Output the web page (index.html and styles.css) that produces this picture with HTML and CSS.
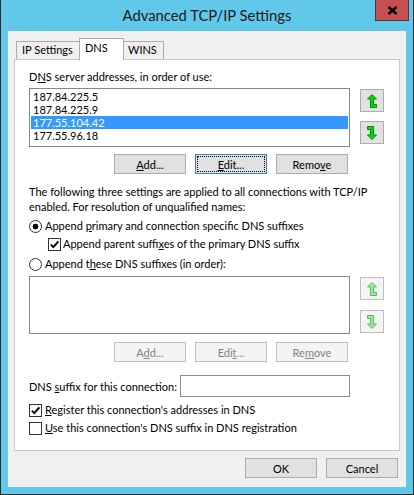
FILE: index.html
```html
<!DOCTYPE html>
<html>
<head>
<meta charset="utf-8">
<title>Advanced TCP/IP Settings</title>
<link rel="stylesheet" href="styles.css">
</head>
<body>
<div class="window">
  <div class="titlebar">
    <span></span>
    <div class="title">Advanced TCP/IP Settings</div>
    <div class="close">
      <svg width="11" height="9" viewBox="0 0 11 9"><path d="M1.5 1 L9.5 8 M9.5 1 L1.5 8" stroke="#000" stroke-width="2.4" fill="none"/></svg>
    </div>
  </div>
  <div class="client">
    <div class="tabs">
      <div class="tab tab-ip">IP Settings</div>
      <div class="tab tab-active tab-dns">DNS</div>
      <div class="tab tab-wins">WINS</div>
    </div>
    <div class="panel">
      <div class="label">D<u>N</u>S server addresses, in order of use:</div>
      <div class="listrow">
        <div class="list list-dns">
          <div class="item">187.84.225.5</div>
          <div class="item">187.84.225.9</div>
          <div class="item item-selected">177.55.104.42</div>
          <div class="item">177.55.96.18</div>
        </div>
        <div class="arrows">
          <div class="arrowbtn">
            <svg width="10" height="14" viewBox="0 0 10 14"><polygon points="5,0.5 9.5,5 6.5,5 6.5,10.5 9.5,10.5 9.5,13.5 3.5,13.5 3.5,5 0.5,5" fill="#00dc00" stroke="#008a00" stroke-width="1"/></svg>
          </div>
          <div class="arrowbtn">
            <svg width="10" height="14" viewBox="0 0 10 14"><polygon points="0.5,0.5 6.5,0.5 6.5,9 9.5,9 5,13.5 0.5,9 3.5,9 3.5,3.5 0.5,3.5" fill="#00dc00" stroke="#008a00" stroke-width="1"/></svg>
          </div>
        </div>
      </div>
      <div class="btnrow">
        <div class="btn"><u>A</u>dd...</div>
        <div class="btn btn-focus"><u>E</u>dit...</div>
        <div class="btn">Remo<u>v</u>e</div>
      </div>
      <p class="note">The following three settings are applied to all connections with TCP/IP<br>enabled. For resolution of unqualified names:</p>
      <div class="opt opt-first">
        <span class="radio radio-on"></span>
        <span>Append <u>p</u>rimary and connection specific DNS suffixes</span>
      </div>
      <div class="opt opt-sub">
        <span class="check"><svg width="11" height="11" viewBox="0 0 11 11"><path d="M1.8 5.6 L4.3 8.2 L9.4 2.3" stroke="#000" stroke-width="1.9" fill="none"/></svg></span>
        <span>Append parent suffi<u>x</u>es of the primary DNS suffix</span>
      </div>
      <div class="opt opt-first">
        <span class="radio"></span>
        <span>Append t<u>h</u>ese DNS suffixes (in order):</span>
      </div>
      <div class="listrow listrow-suffix">
        <div class="list list-suffix"></div>
        <div class="arrows arrows-wide">
          <div class="arrowbtn arrowbtn-disabled">
            <svg width="10" height="14" viewBox="0 0 10 14"><polygon points="5,0.5 9.5,5 6.5,5 6.5,10.5 9.5,10.5 9.5,13.5 3.5,13.5 3.5,5 0.5,5" fill="#9aea9a" stroke="#5cbc5c" stroke-width="1"/></svg>
          </div>
          <div class="arrowbtn arrowbtn-disabled">
            <svg width="10" height="14" viewBox="0 0 10 14"><polygon points="0.5,0.5 6.5,0.5 6.5,9 9.5,9 5,13.5 0.5,9 3.5,9 3.5,3.5 0.5,3.5" fill="#9aea9a" stroke="#5cbc5c" stroke-width="1"/></svg>
          </div>
        </div>
      </div>
      <div class="btnrow btnrow-disabled">
        <div class="btn btn-disabled">A<u>d</u>d...</div>
        <div class="btn btn-disabled">Edi<u>t</u>...</div>
        <div class="btn btn-disabled">Re<u>m</u>ove</div>
      </div>
      <div class="suffixrow">
        <span class="suffixlabel">DNS <u>s</u>uffix for this connection:</span>
        <div class="textbox"></div>
      </div>
      <div class="opt opt-register">
        <span class="check"><svg width="11" height="11" viewBox="0 0 11 11"><path d="M1.8 5.6 L4.3 8.2 L9.4 2.3" stroke="#000" stroke-width="1.9" fill="none"/></svg></span>
        <span><u>R</u>egister this connection's addresses in DNS</span>
      </div>
      <div class="opt opt-use">
        <span class="check"></span>
        <span><u>U</u>se this connection's DNS suffix in DNS registration</span>
      </div>
    </div>
    <div class="footer">
      <div class="btn">OK</div>
      <div class="btn">Cancel</div>
    </div>
  </div>
</div>
</body>
</html>
```
FILE: styles.css
```css
html, body {
  margin: 0;
  padding: 0;
}
body {
  font-family: Lato, "Open Sans", "Liberation Sans", sans-serif;
  font-size: 11px;
  color: #000;
  line-height: 15px;
}
u {
  text-decoration: underline;
  text-underline-offset: 1px;
}
.window {
  width: 414px;
  height: 495px;
  box-sizing: border-box;
  background: #62c8ea;
  border: 1px solid #2b2b2b;
  border-top: 0;
  display: flex;
  flex-direction: column;
}
.titlebar {
  height: 31px;
  flex: none;
  display: grid;
  grid-template-columns: 1fr auto 1fr;
  align-items: start;
  padding: 0 4px;
}
.title {
  font-size: 14.8px;
  line-height: 30px;
  color: #1b1b1b;
}
.close {
  justify-self: end;
  width: 34px;
  height: 21px;
  box-sizing: border-box;
  background: #c75050;
  border: 1px solid #3c3c3c;
  border-top: 0;
  display: flex;
  align-items: center;
  justify-content: center;
}
.client {
  height: 456px;
  margin: 0 7px;
  background: #f0f0f0;
  display: flex;
  flex-direction: column;
}
.tabs {
  height: 28px;
  box-sizing: border-box;
  padding: 7px 0 0 8px;
  display: flex;
  align-items: flex-end;
}
.tab {
  box-sizing: border-box;
  height: 18px;
  border: 1px solid #acacac;
  border-bottom: 0;
  background: #f0f0f0;
  padding-left: 5px;
  line-height: 15px;
  white-space: nowrap;
}
.tab-ip { width: 64px; }
.tab-dns { width: 45px; margin-left: -1px; }
.tab-wins { width: 41px; margin-left: -1px; padding-left: 4px; }
.tab-active {
  height: 22px;
  margin-bottom: -1px;
  background: #fff;
  padding-top: 1px;
  position: relative;
  z-index: 1;
}
.panel {
  height: 392px;
  margin: 0 6px;
  box-sizing: border-box;
  border: 1px solid #c9c9c9;
  background: #fff;
  padding: 9px 0 0 14px;
}
.label {
  line-height: 15px;
}
.listrow {
  display: flex;
  gap: 10px;
  margin-top: 4px;
}
.list {
  box-sizing: border-box;
  width: 321px;
  border: 1px solid #828790;
  background: #fff;
  padding: 1px;
}
.list-dns { height: 59px; }
.list-suffix { height: 58px; }
.item {
  line-height: 13px;
  padding-left: 2px;
}
.item-selected {
  background: #3399ff;
  color: #fff;
}
.arrows {
  display: flex;
  flex-direction: column;
  gap: 9px;
  padding-top: 1px;
}
.arrows-wide { gap: 10px; }
.arrowbtn {
  width: 24px;
  height: 23px;
  box-sizing: border-box;
  border: 1px solid #adadad;
  background: #e1e1e1;
  display: flex;
  align-items: center;
  justify-content: center;
}
.arrowbtn-disabled {
  border-color: #bfbfbf;
  background: #f4f4f4;
}
.btnrow {
  width: 321px;
  box-sizing: border-box;
  padding-right: 2px;
  margin-top: 7px;
  display: flex;
  justify-content: flex-end;
  gap: 9px;
}
.btnrow-disabled {
  margin-top: 8px;
}
.btn {
  width: 72px;
  height: 20px;
  box-sizing: border-box;
  border: 1px solid #adadad;
  background: #e1e1e1;
  text-align: center;
  line-height: 17px;
  padding-top: 1px;
}
.btn-focus {
  border-color: #3c7fb1;
  outline: 1px dotted #000;
  outline-offset: -3px;
}
.btn-disabled {
  border-color: #bfbfbf;
  background: #f4f4f4;
  color: #838383;
}
.note {
  margin: 10px 0 0;
  line-height: 15px;
  white-space: nowrap;
}
.opt {
  height: 16px;
  display: flex;
  align-items: center;
  gap: 3px;
  line-height: 16px;
  white-space: nowrap;
}
.opt-first { margin-top: 4px; }
.opt-sub { margin-top: 2px; padding-left: 19px; gap: 2px; }
.opt-register { margin-top: 5px; }
.opt-use { margin-top: 2px; }
.radio {
  width: 13px;
  height: 13px;
  box-sizing: border-box;
  border: 1px solid #333;
  border-radius: 50%;
  background: #fff;
  flex: none;
}
.radio-on {
  background: radial-gradient(circle, #000 0 2.6px, #fff 3.2px);
}
.check {
  width: 13px;
  height: 13px;
  box-sizing: border-box;
  border: 1px solid #333;
  background: #fff;
  flex: none;
  display: flex;
  align-items: center;
  justify-content: center;
}
.suffixrow {
  width: 321px;
  margin-top: 13px;
  display: flex;
  align-items: center;
}
.suffixlabel {
  flex: 1;
  min-width: 0;
  white-space: nowrap;
}
.textbox {
  flex: none;
  width: 170px;
  height: 22px;
  box-sizing: border-box;
  border: 1px solid #8d8d8d;
  background: #fff;
}
.footer {
  display: flex;
  justify-content: flex-end;
  gap: 9px;
  padding: 7px 8px 0 0;
}
```
